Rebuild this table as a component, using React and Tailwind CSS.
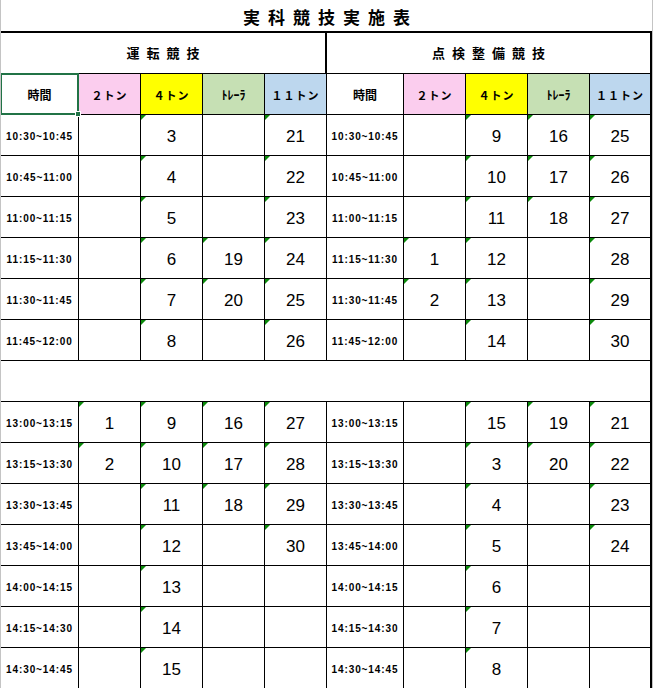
const jp = "font-['Noto_Sans_CJK_JP',sans-serif]";
const num = "font-['Liberation_Sans',Arial,sans-serif]";

const heads = [
  { label: "２トン", bg: "bg-[#fbcdee]", cls: "text-[11px] tracking-[1px]" },
  { label: "４トン", bg: "bg-[#ffff00]", cls: "text-[11px] tracking-[1px]" },
  { label: "ﾄﾚｰﾗ", bg: "bg-[#c6e0b4]", cls: "text-[12px]" },
  { label: "１１トン", bg: "bg-[#bdd7ee]", cls: "text-[11px] tracking-[1px]" },
];

const times1 = ["10:30~10:45", "10:45~11:00", "11:00~11:15", "11:15~11:30", "11:30~11:45", "11:45~12:00"];
const times2 = ["13:00~13:15", "13:15~13:30", "13:30~13:45", "13:45~14:00", "14:00~14:15", "14:15~14:30", "14:30~14:45"];

const left1 = [
  ["", "3", "", "21"],
  ["", "4", "", "22"],
  ["", "5", "", "23"],
  ["", "6", "19", "24"],
  ["", "7", "20", "25"],
  ["", "8", "", "26"],
];
const right1 = [
  ["", "9", "16", "25"],
  ["", "10", "17", "26"],
  ["", "11", "18", "27"],
  ["1", "12", "", "28"],
  ["2", "13", "", "29"],
  ["", "14", "", "30"],
];
const left2 = [
  ["1", "9", "16", "27"],
  ["2", "10", "17", "28"],
  ["", "11", "18", "29"],
  ["", "12", "", "30"],
  ["", "13", "", ""],
  ["", "14", "", ""],
  ["", "15", "", ""],
];
const right2 = [
  ["", "15", "19", "21"],
  ["", "3", "20", "22"],
  ["", "4", "", "23"],
  ["", "5", "", "24"],
  ["", "6", "", ""],
  ["", "7", "", ""],
  ["", "8", "", ""],
];

function NumCell({ value, last }) {
  return (
    <div
      className={`relative flex h-[41px] items-center justify-center border-b border-black pt-[3px] text-[17px] text-black ${num} ${
        last ? "border-r-2" : "border-r"
      }`}
    >
      {value && (
        <span className="absolute left-0 top-0 h-0 w-0 border-r-[5px] border-t-[5px] border-r-transparent border-t-[#0b8a0b]" />
      )}
      {value}
    </div>
  );
}

function TimeCell({ t }) {
  return (
    <div
      className={`flex h-[41px] items-center justify-center border-b border-r border-black pt-[3px] text-[10px] font-bold tracking-[0.9px] text-black ${num}`}
    >
      {t}
    </div>
  );
}

function Row({ t, l, r }) {
  return (
    <>
      <TimeCell t={t} />
      {l.map((v, i) => (
        <NumCell key={"l" + i} value={v} />
      ))}
      <TimeCell t={t} />
      {r.map((v, i) => (
        <NumCell key={"r" + i} value={v} last={i === 3} />
      ))}
    </>
  );
}

function HeadCells({ side }) {
  return (
    <>
      <div
        className={`relative flex h-[41px] items-center justify-center border-b border-r border-black pt-[2px] text-[12px] font-bold text-black ${jp}`}
      >
        時間
        {side === "l" && (
          <div className="absolute -left-px -top-px -right-px -bottom-px border-2 border-[#217346]">
            <span className="absolute -bottom-[4px] -right-[4px] h-[6px] w-[6px] border border-white bg-[#217346]" />
          </div>
        )}
      </div>
      {heads.map((h, i) => (
        <div
          key={side + i}
          className={`flex h-[41px] items-center justify-center border-b border-black pt-[2px] font-bold text-black ${jp} ${h.bg} ${h.cls} ${
            side === "r" && i === 3 ? "border-r-2" : "border-r"
          }`}
        >
          {h.label}
        </div>
      ))}
    </>
  );
}

export default function App() {
  return (
    <div className="flex h-[688px] w-[653px] flex-col overflow-hidden border-x border-[#c4c4c4] bg-white">
      <div
        className={`flex h-[31px] shrink-0 items-center justify-center pl-[8px] pt-[2px] text-[17px] font-bold tracking-[8px] text-black ${jp}`}
      >
        実科競技実施表
      </div>
      <div className="grid grid-cols-[78px_62px_62px_62px_62px_77px_62px_62px_62px_62px] border-t-2 border-black">
        <div
          className={`col-span-5 flex h-[41px] items-center justify-center border-b border-r-2 border-black pl-[7px] text-[13px] font-bold tracking-[7px] text-black ${jp}`}
        >
          運転競技
        </div>
        <div
          className={`col-span-5 flex h-[41px] items-center justify-center border-b border-r-2 border-black pl-[7px] text-[13px] font-bold tracking-[7px] text-black ${jp}`}
        >
          点検整備競技
        </div>
        <HeadCells side="l" />
        <HeadCells side="r" />
        {times1.map((t, i) => (
          <Row key={t} t={t} l={left1[i]} r={right1[i]} />
        ))}
        <div className="col-span-10 h-[41px] border-b border-r-2 border-black" />
        {times2.map((t, i) => (
          <Row key={t} t={t} l={left2[i]} r={right2[i]} />
        ))}
      </div>
    </div>
  );
}
